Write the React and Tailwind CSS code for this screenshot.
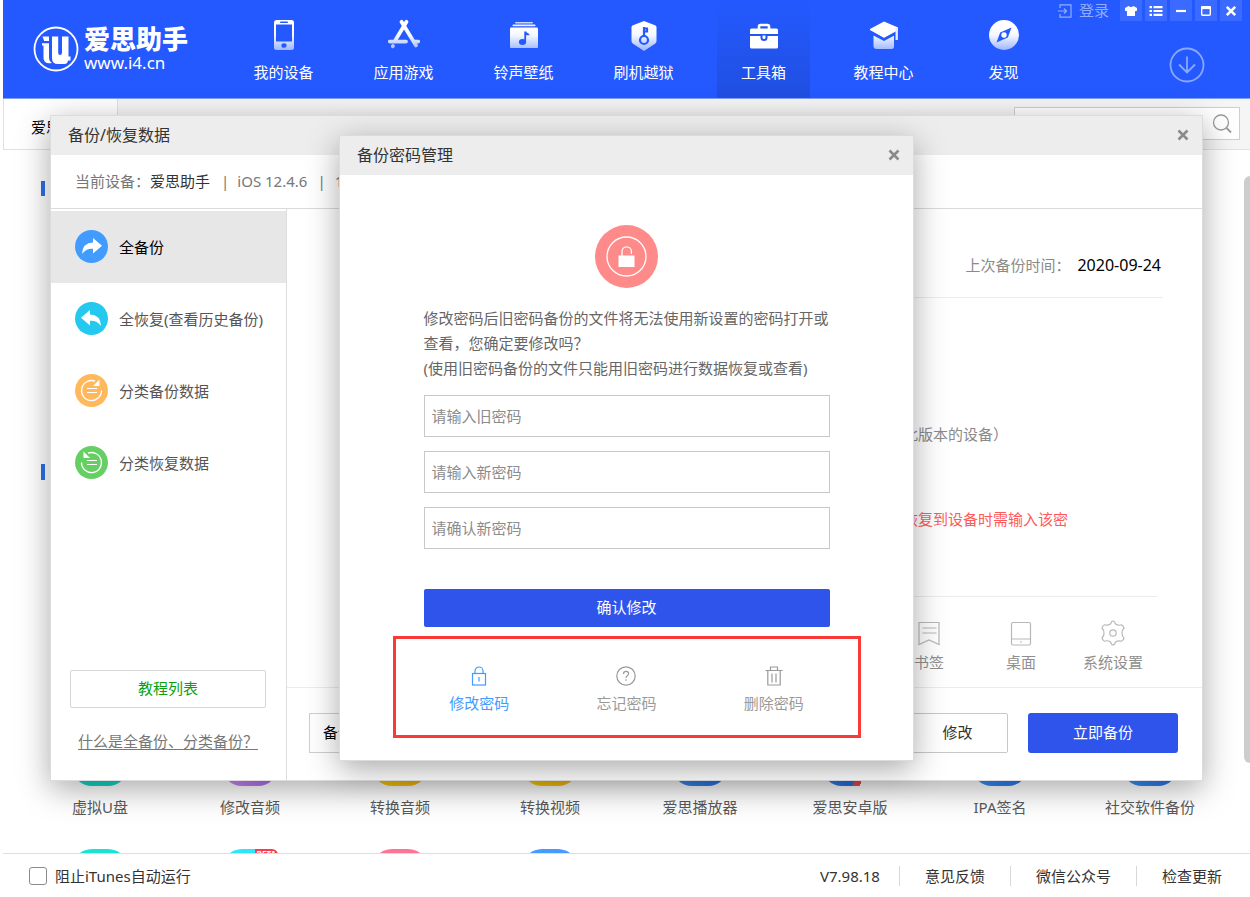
import React from "react";

const NAV_ITEMS = [
  { label: "我的设备", icon: "phone" },
  { label: "应用游戏", icon: "apps" },
  { label: "铃声壁纸", icon: "music" },
  { label: "刷机越狱", icon: "shield" },
  { label: "工具箱", icon: "toolbox", active: true },
  { label: "教程中心", icon: "school" },
  { label: "发现", icon: "compass" },
];

function NavIcon({ name }) {
  const fill = "url(#nav-fade)";
  const blue = "#2459ff";
  return (
    <svg viewBox="0 0 32 32" className="size-8" fill="none" aria-hidden="true">
      <defs>
        <linearGradient id="nav-fade" gradientUnits="userSpaceOnUse" x1="0" y1="8" x2="0" y2="32">
          <stop offset="0" stopColor="#ffffff" />
          <stop offset="0.35" stopColor="#f4f7ff" />
          <stop offset="1" stopColor="#98b2ff" />
        </linearGradient>
      </defs>
      {name === "phone" && (
        <>
          <rect x="6" y="1" width="20" height="30" rx="2.5" fill={fill} />
          <rect x="8" y="5.5" width="16" height="17" fill={blue} />
          <rect x="12" y="2.6" width="8" height="1.4" rx="0.7" fill={blue} />
          <ellipse cx="16" cy="26.5" rx="2.6" ry="2.3" fill={blue} />
        </>
      )}
      {name === "apps" && (
        <g stroke={fill} strokeWidth="3.8" strokeLinecap="round">
          <path d="M13.5 2.8 28 26.5" />
          <path d="M18.5 2.8 7.500 21" />
          <path d="M1.800 22.600H18" />
          <path d="M26.500 22.600H30.200" />
          <path d="M5 27 4.800 27.300" />
        </g>
      )}
      {name === "music" && (
        <>
          <rect x="7" y="3" width="18" height="1.6" rx="0.8" fill="#c9d7ff" />
          <rect x="4.500" y="5.500" width="23" height="1.800" rx="0.900" fill="#eef2ff" />
          <rect x="2" y="8.500" width="28" height="20.500" rx="1" fill={fill} />
          <ellipse cx="14.500" cy="23" rx="3.600" ry="3" fill={blue} />
          <path d="M16.300 23V12.500h2c.4 2 3.200 1.500 3.200 3.700h-3.400V23z" fill={blue} />
        </>
      )}
      {name === "shield" && (
        <>
          <path d="M16 2 27 6.200q1.500.6 1.500 2V22q0 1.800-1.500 2.700L16 32 5 24.700Q3.500 23.800 3.500 22V8.200q0-1.400 1.500-2Z" fill={fill} />
          <circle cx="16" cy="21" r="4" stroke={blue} strokeWidth="2.200" />
          <path d="M16 17V8M16 9.500h3v3h-3" stroke={blue} strokeWidth="2.200" />
        </>
      )}
      {name === "toolbox" && (
        <>
          <path d="M11 10V7.500q0-1.500 1.500-1.500h7q1.500 0 1.500 1.500V10" stroke="#fff" strokeWidth="2.600" />
          <path d="M3.500 9.500h25q1.500 0 1.500 1.500v4H2v-4q0-1.500 1.500-1.500Z" fill="#fff" />
          <path d="M2 17h10.500v1.500q0 3.500 3.500 3.500t3.500-3.500V17H30v11q0 1.500-1.500 1.500h-25Q2 29.500 2 28Z" fill="#fff" />
          <path d="M14.500 16.500h3v2q0 1.500-1.500 1.500t-1.500-1.500Z" fill="#fff" />
        </>
      )}
      {name === "school" && (
        <>
          <path d="M5.500 16.500 16 22l8-4.300 2-1v10.800q0 2.500-2.500 2.500h-15q-3 0-3-3Z" fill={fill} />
          <path d="M16 2.500 30 8.500v3L16 19 2 11.500v-1.500Z" fill="#fff" />
          <path d="M2 11.800 16 19.800l14-7.800" stroke={blue} strokeWidth="1.300" />
          <path d="M28.700 9v12" stroke="#e3eaff" strokeWidth="2.400" />
        </>
      )}
      {name === "compass" && (
        <>
          <circle cx="16" cy="16" r="15" fill={fill} />
          <path d="M23.500 8.500 19.800 18.500 8.500 23.500 12.200 13.500Z" fill={blue} />
          <circle cx="16" cy="16" r="2.700" fill="#fff" />
        </>
      )}
    </svg>
  );
}

function Logo() {
  return (
    <a href="#home" className="flex w-[234px] items-center gap-[5px] pl-[30px] text-white">
      <svg viewBox="0 0 46 46" className="size-[46px] shrink-0" fill="none" aria-hidden="true">
        <circle cx="23" cy="23" r="21.500" stroke="#fff" strokeWidth="1.800" />
        <path d="M9.500 10.500H16v4.600H11.200Z" fill="#fff" />
        <path d="M9 17.300h7V31.500q0 3.500 3 5.500-8.500 1.500-8.500-5.500V19.500H9Z" fill="#fff" />
        <path d="M19 10.500h6.200V26.500q0 2.500 1.800 2.500 2 0 2-2.500v-16h6.500V30.500h2v4H35q-.5 3.500-3.500 3.500H25q-6 0-6-6Z" fill="#fff" />
      </svg>
      <span className="flex flex-col">
        <span className="text-[26px] leading-[28px] font-black">爱思助手</span>
        <span className="text-[17px] leading-[20px]">www.i4.cn</span>
      </span>
    </a>
  );
}

function WindowButton({ label, children }) {
  return (
    <button type="button" aria-label={label} className="flex h-[21px] w-[22px] items-center justify-center bg-white/10">
      <svg viewBox="0 0 14 14" className="size-[14px]" fill="none" aria-hidden="true">
        {children}
      </svg>
    </button>
  );
}

function AppHeader() {
  return (
    <header className="flex h-[99px] border-b border-[#7f9fff] bg-[#2459ff]">
      <Logo />
      <nav className="flex gap-[27px]">
        {NAV_ITEMS.map((item) => (
          <a
            key={item.label}
            href={"#" + item.icon}
            className={
              "flex w-[93px] flex-col items-center gap-[11px] pt-[19px] text-[15px] leading-[20px] text-white " +
              (item.active ? "bg-linear-to-b from-[#2459ff] to-[#204fe0]" : "")
            }
          >
            <NavIcon name={item.icon} />
            {item.label}
          </a>
        ))}
      </nav>
      <div className="ml-auto flex flex-col items-end gap-[26px] pr-[8px]">
        <div className="flex items-center gap-[3px]">
          <a href="#login" className="mr-[8px] flex items-center gap-[7px] text-[15px] leading-[21px] text-[#92adff]">
            <svg viewBox="0 0 14 14" className="size-[14px]" fill="none" stroke="currentColor" strokeWidth="1.200" aria-hidden="true">
              <path d="M2 4V.8h11v12.400H2V10M0 7h8.500M6 4.500 8.500 7 6 9.500" />
            </svg>
            登录
          </a>
          <WindowButton label="皮肤">
            <path d="M4.500 2q2.500 1.800 5 0L13 4v2.800l-2 .4V12H3V7.200l-2-.4V4Z" fill="#fff" />
          </WindowButton>
          <WindowButton label="菜单">
            <path d="M.5 3.200h2.500M4.500 3.200H13.500M.5 7h2.500M4.500 7H13.500M.5 10.800h2.500M4.500 10.800H13.500" stroke="#fff" strokeWidth="2.200" />
          </WindowButton>
          <WindowButton label="最小化">
            <path d="M2 7h10" stroke="#fff" strokeWidth="2.200" />
          </WindowButton>
          <WindowButton label="最大化">
            <rect x="2.700" y="2.700" width="8.600" height="8.600" rx="1" stroke="#fff" strokeWidth="1.400" />
            <path d="M2 3.700h10" stroke="#fff" strokeWidth="2.800" />
          </WindowButton>
          <WindowButton label="关闭">
            <path d="m2.800 2.800 8.400 8.400M11.200 2.800 2.800 11.200" stroke="#fff" strokeWidth="2.600" />
          </WindowButton>
        </div>
        <button type="button" aria-label="下载" className="mr-[37px] text-[#8ba8ff]">
          <svg viewBox="0 0 36 36" className="size-[36px]" fill="none" stroke="currentColor" strokeWidth="1.800" aria-hidden="true">
            <circle cx="18" cy="18" r="16.500" />
            <path d="M18 9.500v16M10 17.500l8 8 8-8" />
          </svg>
        </button>
      </div>
    </header>
  );
}

function TabBar() {
  return (
    <div className="flex h-[51px] items-start border-b border-[#e2e2e2] bg-[#f5f5f5]">
      <a href="#tools" className="flex h-[50px] w-[115px] items-center border-x border-[#e0e0e0] bg-white pt-[6px] pl-[27px] text-[15px] leading-[20px] whitespace-nowrap text-black">
        爱思工具
      </a>
      <label className="mt-[8px] mr-[10px] ml-auto flex h-[33px] w-[226px] items-center border border-[#cfcfcf] bg-white pr-[7px]">
        <input type="search" aria-label="搜索" className="min-w-0 flex-1 bg-transparent px-2 text-[15px] outline-none" />
        <svg viewBox="0 0 20 20" className="size-[20px]" fill="none" stroke="#9a9a9a" strokeWidth="1.300" aria-hidden="true">
          <circle cx="9" cy="8.500" r="7.500" />
          <path d="m14.500 14 4.500 4.500" strokeWidth="1.800" />
        </svg>
      </label>
    </div>
  );
}

const TOOLS = [
  { label: "虚拟U盘", tone: "bg-[#12d6c4]" },
  { label: "修改音频", tone: "bg-linear-to-r from-[#d68af0] to-[#a36af5]" },
  { label: "转换音频", tone: "bg-linear-to-r from-[#fcd800] to-[#ffb414]" },
  { label: "转换视频", tone: "bg-linear-to-r from-[#fcd800] to-[#ffb414]" },
  { label: "爱思播放器", tone: "bg-linear-to-r from-[#3a94f8] to-[#2a70ea]" },
  { label: "爱思安卓版", tone: "bg-[linear-gradient(110deg,#3a94f8_0%,#2a70ea_66%,#f04a4a_66%,#f04a4a_76%,#ffffff_76%)]" },
  { label: "IPA签名", tone: "bg-linear-to-r from-[#3a94f8] to-[#2a70ea]" },
  { label: "社交软件备份", tone: "bg-linear-to-r from-[#3a94f8] to-[#2a70ea]" },
];

const MORE_TOOLS = [
  { id: "t1", tone: "bg-[#18e4d4]" },
  { id: "t2", tone: "bg-[#30e4fb]", beta: true },
  { id: "t3", tone: "bg-[#ff7394]" },
  { id: "t4", tone: "bg-[#459bff]" },
];

function ToolPage() {
  return (
    <main className="flex min-h-0 flex-1 overflow-hidden">
      <div className="min-w-0 flex-1 pl-[22px]">
        <section className="h-[284px] pt-[31px]">
          <div className="ml-[16px] h-[15px] w-[4px] bg-[#2d6fe8]" />
        </section>
        <section className="pt-[30px]">
          <div className="ml-[16px] h-[16px] w-[4px] bg-[#2d6fe8]" />
          <ul className="mt-[250px] grid grid-cols-[repeat(8,150px)] gap-y-[32px]">
            {TOOLS.map((tool) => (
              <li key={tool.label} className="flex flex-col items-center gap-[11px] text-[15px] leading-[20px] text-[#5a5a5a]">
                <span className={"size-[56px] rounded-[20px] " + tool.tone} />
                {tool.label}
              </li>
            ))}
            {MORE_TOOLS.map((tool) => (
              <li key={tool.id} className="flex justify-center">
                <span className={"relative size-[56px] rounded-[20px] " + tool.tone}>
                  {tool.beta && (
                    <span className="absolute top-0 right-0 rounded-tr-md bg-[#ff3a4c] px-[2px] text-[8px] leading-[9px] font-bold text-white">
                      BETA
                    </span>
                  )}
                </span>
              </li>
            ))}
          </ul>
        </section>
      </div>
      <div className="mt-[26px] h-[587px] w-[6px] rounded-l-full bg-[#cdcdcd]" />
    </main>
  );
}

function AppFooter() {
  return (
    <footer className="flex h-[44px] items-center border-t border-[#dedede] bg-white pr-[28px] pl-[26px] text-[15px] leading-[20px] text-[#333]">
      <label className="mr-auto flex items-center gap-[8px]">
        <input type="checkbox" className="size-[18px] appearance-none rounded-[3px] border border-[#8a8a8a] bg-white" />
        阻止iTunes自动运行
      </label>
      <span className="pr-[19px]">V7.98.18</span>
      <a href="#feedback" className="border-l border-[#d8d8d8] px-[25px]">意见反馈</a>
      <a href="#wechat" className="border-l border-[#d8d8d8] px-[25px]">微信公众号</a>
      <a href="#update" className="border-l border-[#d8d8d8] pl-[25px]">检查更新</a>
    </footer>
  );
}

const SIDE_ITEMS = [
  { label: "全备份", icon: "share", color: "#429cff", active: true },
  { label: "全恢复(查看历史备份)", icon: "reply", color: "#25c8ef" },
  { label: "分类备份数据", icon: "cw", color: "#ffb85c" },
  { label: "分类恢复数据", icon: "ccw", color: "#66cf63" },
];

function SideIcon({ icon, color }) {
  const flipped = icon === "reply" || icon === "ccw";
  const solid = icon === "share" || icon === "reply";
  return (
    <svg viewBox="0 0 33 33" className="size-[33px]" fill="none" aria-hidden="true">
      <circle cx="16.500" cy="16.500" r="16.500" fill={color} />
      <g transform={flipped ? "translate(33 0) scale(-1 1)" : undefined}>
        {solid ? (
          <path d="M18 8 27 15.800 18 23.500V18.800Q11 18.300 7 24 7.500 13 18 12.600Z" fill="#fff" />
        ) : (
          <>
            <path d="M26.500 16.500a10 10 0 1 1-6.500-9.300" stroke="#fff" strokeWidth="1.300" />
            <path d="M24.500 5.500v6.500h-6.500Z" fill="#fff" />
          </>
        )}
      </g>
      {!solid && <path d="M12 14.500h10M12 18.500h10" stroke="#fff" strokeWidth="1.200" />}
    </svg>
  );
}

function CloseButton() {
  return (
    <button type="button" aria-label="关闭" className="text-[#8a8a8a]">
      <svg viewBox="0 0 12 12" className="size-[12px]" fill="none" stroke="currentColor" strokeWidth="2.600" aria-hidden="true">
        <path d="m1.500 1.500 9 9M10.500 1.500l-9 9" />
      </svg>
    </button>
  );
}

const DATA_TYPES = [
  {
    label: "书签",
    drawing: (
      <>
        <path d="M3 2.500h20v22l-10-4.500-10 4.500Z" />
        <path d="M6.500 8h14M6.500 13h14" />
      </>
    ),
  },
  {
    label: "桌面",
    drawing: (
      <>
        <rect x="3.500" y="2.500" width="19" height="22.500" rx="1.500" />
        <path d="M3.500 19h19M12 22h2" />
      </>
    ),
  },
  {
    label: "系统设置",
    drawing: (
      <>
        <path d="M10.500 4q1-3 2.500-3t2.500 3q3 2 6 .8 2 1.200 2.500 3.200-2.300 2.500-2 5 0 3 2 5-.5 2.300-2.500 3.200-3-1-6 .8-1 3-2.500 3t-2.500-3q-3-2-6-.8Q2.500 20.300 2 18q2.300-2.500 2-5 0-3-2-5 .5-2.300 2.500-3.200 3 1 6-.8Z" />
        <circle cx="13" cy="13" r="3.200" />
      </>
    ),
  },
];

function BackupDialog() {
  return (
    <section aria-label="备份/恢复数据" className="flex w-[1153px] flex-col border border-[#dcdcdc] bg-white shadow-[0_8px_30px_rgba(0,0,0,0.34)]">
      <header className="flex h-[39px] items-center justify-between bg-[#ededed] pr-[13px] pl-[17px]">
        <h2 className="text-[16px] leading-[24px] text-[#333]">备份/恢复数据</h2>
        <CloseButton />
      </header>
      <div className="flex h-[54px] items-center border-b border-[#dadada] pl-[24px] text-[15px] leading-[20px] text-[#777]">
        <span>当前设备：</span>
        <span className="text-[#333]">爱思助手</span>
        <span className="pr-[8px] pl-[11px]">|</span>
        <span>iOS 12.4.6</span>
        <span className="pr-[9px] pl-[10px]">|</span>
        <span>12</span>
      </div>
      <div className="flex">
        <aside className="flex w-[236px] flex-col border-r border-[#dedede] pt-[2px]">
          {SIDE_ITEMS.map((item) => (
            <button
              key={item.label}
              type="button"
              className={
                "flex h-[72px] items-center gap-[11px] pl-[24px] text-[15px] leading-[20px] " +
                (item.active ? "bg-[#e7e7e7] text-black" : "text-[#555]")
              }
            >
              <SideIcon icon={item.icon} color={item.color} />
              {item.label}
            </button>
          ))}
          <button type="button" className="mt-auto mr-[20px] ml-[19px] h-[38px] rounded-[2px] border border-[#d6d6d6] text-[15px] text-[#0d9f12]">
            教程列表
          </button>
          <a href="#about-backup" className="mt-[22px] mb-[28px] ml-[27px] w-fit text-[15px] leading-[22px] text-[#777] underline underline-offset-2">
            什么是全备份、分类备份？
          </a>
        </aside>
        <div className="flex min-w-0 flex-1 flex-col">
          <div className="mr-[39px] ml-[54px] flex h-[89px] items-center justify-end gap-[7px] border-b border-[#ececec] pt-[24px] pr-[2px] text-[15px] leading-[20px] text-[#8a8a8a]">
            上次备份时间：
            <span className="text-[16px] text-black">2020-09-24</span>
          </div>
          <div className="mr-[45px] ml-[54px] border-b border-[#ececec] pt-[126px] pb-[67px] pl-[562px] text-[15px] leading-[20px]">
            <p className="whitespace-nowrap text-[#8a8a8a]">此版本的设备）</p>
            <p className="mt-[65px] whitespace-nowrap text-[#ff5a5a]">恢复到设备时需输入该密</p>
          </div>
          <ul className="mr-[43px] flex justify-end pt-[23px] pb-[15px]">
            {DATA_TYPES.map((type) => (
              <li key={type.label} className="flex w-[92px] flex-col items-center gap-[6px] text-[15px] leading-[20px] text-[#8f8f8f]">
                <svg viewBox="0 0 26 26" className="size-[26px]" fill="none" stroke="#b8b8b8" strokeWidth="1.200" aria-hidden="true">
                  {type.drawing}
                </svg>
                {type.label}
              </li>
            ))}
          </ul>
          <div className="flex h-[93px] items-center border-t border-[#ececec] pr-[24px] pb-[2px] pl-[22px] text-[15px]">
            <div className="flex h-[40px] flex-1 items-center border border-[#cfcfcf] pl-[13px] text-black">备份</div>
            <button type="button" className="ml-[30px] h-[40px] w-[101px] rounded-[2px] border border-[#c8c8c8] text-[#333]">
              修改
            </button>
            <button type="button" className="ml-[20px] h-[40px] w-[150px] rounded-[3px] bg-[#2f54eb] text-white">
              立即备份
            </button>
          </div>
        </div>
      </div>
    </section>
  );
}

const PASSWORD_FIELDS = ["请输入旧密码", "请输入新密码", "请确认新密码"];

const PASSWORD_ACTIONS = [
  {
    label: "修改密码",
    active: true,
    drawing: (
      <>
        <rect x="3.500" y="7.500" width="13" height="11.500" />
        <path d="M6 7.500V5a4 4 0 0 1 8 0v2.500M10 11v4.500" />
      </>
    ),
  },
  {
    label: "忘记密码",
    drawing: (
      <>
        <circle cx="10" cy="10" r="9.200" />
        <path d="M7.500 8q0-2.600 2.600-2.600 2.500 0 2.500 2.200 0 1.400-1.300 2.200-1.300.8-1.300 2.200M10 13.200v1.500" />
      </>
    ),
  },
  {
    label: "删除密码",
    drawing: <path d="M1.500 4.500h17M6.500 4.500V1h7v3.500M3.800 4.500V19h12.400V4.500M8 7.500v9M12 7.500v9" />,
  },
];

function PasswordDialog() {
  return (
    <section role="dialog" aria-label="备份密码管理" className="flex w-[575px] flex-col border border-[#dcdcdc] bg-white shadow-[0_8px_30px_rgba(0,0,0,0.34)]">
      <header className="flex h-[39px] items-center justify-between bg-[#ededed] pr-[13px] pl-[17px]">
        <h2 className="text-[16px] leading-[24px] text-[#333]">备份密码管理</h2>
        <CloseButton />
      </header>
      <form className="flex flex-col pt-[50px] pb-[22px]" onSubmit={(event) => event.preventDefault()}>
        <svg viewBox="0 0 63 63" className="mx-auto size-[63px]" fill="none" aria-hidden="true">
          <circle cx="31.500" cy="31.500" r="31.500" fill="#ff8a8a" />
          <circle cx="31.500" cy="31.500" r="19.500" stroke="#fff" strokeWidth="1.300" />
          <rect x="23.500" y="30.500" width="16" height="11.500" fill="#fff" />
          <path d="M27 31v-4.500a4.700 4.700 0 0 1 9.400 0V29" stroke="#fff" strokeWidth="1.300" />
        </svg>
        <div className="mx-auto mt-[18px] flex w-[406px] flex-col text-[15px]">
          <p className="leading-[25px] whitespace-nowrap text-[#666]">
            修改密码后旧密码备份的文件将无法使用新设置的密码打开或
            <br />
            查看，您确定要修改吗？
            <br />
            (使用旧密码备份的文件只能用旧密码进行数据恢复或查看)
          </p>
          <div className="mt-[14px] flex flex-col gap-[14px]">
            {PASSWORD_FIELDS.map((text) => (
              <input
                key={text}
                type="password"
                aria-label={text}
                placeholder={text}
                className="h-[42px] border border-[#c8c8c8] px-[7px] text-[15px] outline-none placeholder:text-[#8c8c8c]"
              />
            ))}
          </div>
          <button type="submit" className="mt-[40px] h-[38px] rounded-[2px] bg-[#2f54eb] text-white">
            确认修改
          </button>
        </div>
        <div className="mx-auto mt-[9px] grid w-[468px] grid-cols-3 border-3 border-[#f93a37] px-[10px] pt-[27px] pb-[22px]">
          {PASSWORD_ACTIONS.map((action) => (
            <button
              key={action.label}
              type="button"
              className={
                "flex flex-col items-center gap-[7px] text-[15px] leading-[20px] " +
                (action.active ? "text-[#429cff]" : "text-[#9a9a9a]")
              }
            >
              <svg viewBox="0 0 20 20" className="size-[20px]" fill="none" stroke="currentColor" strokeWidth="1.200" aria-hidden="true">
                {action.drawing}
              </svg>
              {action.label}
            </button>
          ))}
        </div>
      </form>
    </section>
  );
}

export default function App() {
  return (
    <div className="relative flex h-screen flex-col overflow-hidden bg-white pl-[3px] font-['Noto_Sans','Noto_Sans_CJK_SC',sans-serif]">
      <AppHeader />
      <TabBar />
      <ToolPage />
      <AppFooter />
      <div className="absolute inset-y-0 right-0 left-[3px] flex items-center justify-center pb-[2px]">
        <BackupDialog />
      </div>
      <div className="absolute inset-y-0 right-0 left-[3px] flex items-center justify-center pb-[2px]">
        <PasswordDialog />
      </div>
    </div>
  );
}
